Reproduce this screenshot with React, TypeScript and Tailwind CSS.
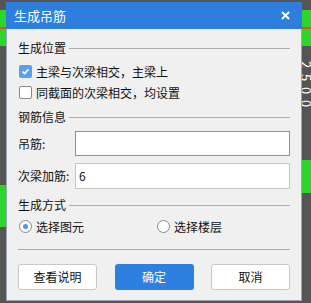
import React from "react";

const font = { fontFamily: '"Noto Sans CJK SC", "Noto Sans", sans-serif' };

function Section({ title, mt }: { title: string; mt: string }) {
  return (
    <div className={`flex h-[20px] items-center ${mt}`}>
      <span className="text-[12px] text-[#111]">{title}</span>
      <div className="ml-[3px] h-px flex-1 bg-[#ababab]" />
    </div>
  );
}

function Checkbox({ checked }: { checked: boolean }) {
  if (checked) {
    return (
      <div className="flex h-[13px] w-[13px] items-center justify-center rounded-[2px] bg-[#5aa0f2]">
        <svg width="9" height="9" viewBox="0 0 9 9">
          <path d="M1.5 4.6 L3.6 6.6 L7.6 2.2" fill="none" stroke="#fff" strokeWidth="1.6" />
        </svg>
      </div>
    );
  }
  return <div className="h-[13px] w-[13px] rounded-[2px] border border-[#8a8a8a] bg-white" />;
}

function Radio({ checked }: { checked: boolean }) {
  return (
    <div className="flex h-[13px] w-[13px] items-center justify-center rounded-full border border-[#8a8a8a] bg-white">
      {checked && <div className="h-[5px] w-[5px] rounded-full bg-[#4a95f0]" />}
    </div>
  );
}

export default function App() {
  return (
    <div className="relative h-[303px] w-[311px] overflow-hidden bg-[#555555]" style={font}>
      {/* background canvas decorations */}
      <div className="absolute left-0 top-[10px] h-[36px] w-[6px] bg-[#2dd52d]" />
      <div className="absolute left-0 top-[27px] h-[2px] w-[6px] bg-[#e0502a]" />
      <div className="absolute left-[302px] top-[10px] h-[36px] w-[9px] bg-[#2dd52d]" />
      <div className="absolute left-[302px] top-[27px] h-[2px] w-[9px] bg-[#e0502a]" />
      <div className="absolute left-[302px] top-[160px] h-[33px] w-[9px] bg-[#2dd52d]" />
      <div className="absolute left-0 top-[185px] h-[42px] w-[6px] bg-[#2dd52d]" />
      <div className="absolute left-[303px] top-[58px] flex flex-col text-[13px] leading-[13px] text-white">
        <span className="rotate-90">2</span>
        <span className="rotate-90">5</span>
        <span className="rotate-90">0</span>
        <span className="rotate-90">0</span>
      </div>

      {/* dialog */}
      <div className="absolute left-[6px] top-[2px] flex h-[299px] w-[296px] flex-col bg-[#f0f0f0]">
        <div className="flex h-[27px] items-center justify-between bg-[#2e7fdd] pl-[8px] pr-[12px]">
          <span className="text-[13px] text-white">生成吊筋</span>
          <svg width="9" height="9" viewBox="0 0 9 9">
            <path d="M1 1 L8 8 M8 1 L1 8" stroke="#fff" strokeWidth="2" />
          </svg>
        </div>
        <div className="flex flex-1 flex-col border-x border-b border-[#9aa6b6] px-[11px]">
          <Section title="生成位置" mt="mt-[9px]" />
          <div className="mt-[3px] flex h-[21px] items-center">
            <div className="ml-[1px]">
              <Checkbox checked />
            </div>
            <span className="ml-[4px] text-[12px] text-[#111]">主梁与次梁相交，主梁上</span>
          </div>
          <div className="flex h-[21px] items-center">
            <div className="ml-[1px]">
              <Checkbox checked={false} />
            </div>
            <span className="ml-[4px] text-[12px] text-[#111]">同截面的次梁相交，均设置</span>
          </div>
          <Section title="钢筋信息" mt="mt-[4px]" />
          <div className="mt-[4px] flex h-[25px] items-center">
            <span className="w-[57px] text-[12px] text-[#111]">吊筋:</span>
            <div className="h-full flex-1 border border-[#6f93d8] bg-white" />
          </div>
          <div className="mt-[7px] flex h-[26px] items-center">
            <span className="w-[57px] text-[12px] text-[#111]">次梁加筋:</span>
            <div className="flex h-full flex-1 items-center border border-[#c6c6c6] bg-white pl-[3px] text-[12px] text-[#111]">
              6
            </div>
          </div>
          <Section title="生成方式" mt="mt-[6px]" />
          <div className="mt-[1px] flex h-[21px] items-center">
            <div className="flex w-[139px] items-center">
              <div className="ml-[1px]">
                <Radio checked />
              </div>
              <span className="ml-[4px] text-[12px] text-[#111]">选择图元</span>
            </div>
            <div className="flex items-center">
              <Radio checked={false} />
              <span className="ml-[4px] text-[12px] text-[#111]">选择楼层</span>
            </div>
          </div>
          <div className="mt-[12px] h-px bg-[#ababab]" />
          <div className="mt-[14px] flex h-[26px] justify-between">
            <div className="flex w-[79px] items-center justify-center rounded-[3px] border border-[#c8c8c8] bg-white text-[12px] text-[#111]">
              查看说明
            </div>
            <div className="flex w-[79px] items-center justify-center rounded-[3px] bg-[#2e80e0] text-[12px] text-white">
              确定
            </div>
            <div className="flex w-[79px] items-center justify-center rounded-[3px] border border-[#c8c8c8] bg-white text-[12px] text-[#111]">
              取消
            </div>
          </div>
        </div>
      </div>
    </div>
  );
}
